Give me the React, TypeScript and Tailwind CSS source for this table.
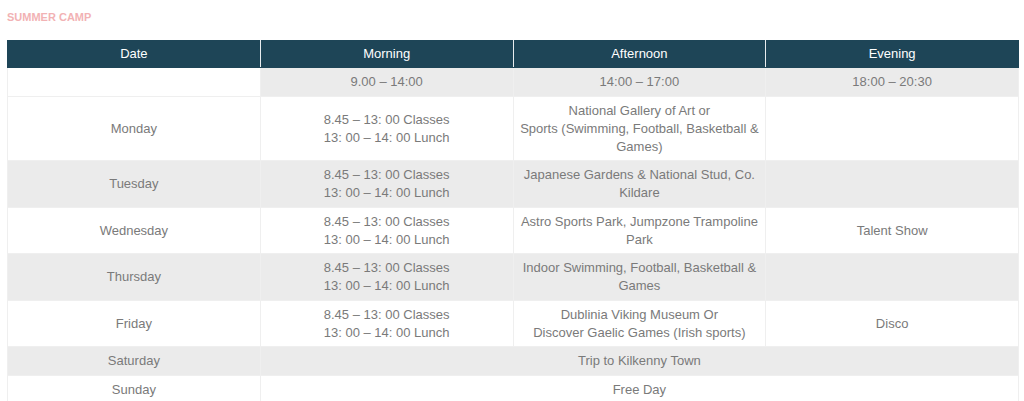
import React from "react";

const classes = ["8.45 – 13: 00 Classes", "13: 00 – 14: 00 Lunch"];

export default function App() {
  const td = "border border-[#efefef] px-[5px] pt-[5px] pb-[4.5px] text-center align-middle";
  const lines = (arr: string[]) =>
    arr.map((l, i) => (
      <React.Fragment key={i}>
        {i > 0 && <br />}
        {l}
      </React.Fragment>
    ));
  const rows: { date: string; m?: string[]; a: string[]; e?: string[]; span?: boolean; gray: boolean }[] = [
    { date: "Monday", m: classes, a: ["National Gallery of Art or", "Sports (Swimming, Football, Basketball & Games)"], gray: false },
    { date: "Tuesday", m: classes, a: ["Japanese Gardens & National Stud, Co. Kildare"], gray: true },
    { date: "Wednesday", m: classes, a: ["Astro Sports Park, Jumpzone Trampoline Park"], e: ["Talent Show"], gray: false },
    { date: "Thursday", m: classes, a: ["Indoor Swimming, Football, Basketball & Games"], gray: true },
    { date: "Friday", m: classes, a: ["Dublinia Viking Museum Or", "Discover Gaelic Games (Irish sports)"], e: ["Disco"], gray: false },
    { date: "Saturday", a: ["Trip to Kilkenny Town"], span: true, gray: true },
    { date: "Sunday", a: ["Free Day"], span: true, gray: false },
  ];
  return (
    <div className="bg-white w-[1024px] h-[401px] overflow-hidden" style={{ fontFamily: '"Liberation Sans", Arial, sans-serif' }}>
      <div className="px-[7px] pt-[11px]">
        <div className="text-[11px] leading-[13px] font-bold text-[#f2b2b4] uppercase">Summer Camp</div>
        <table className="mt-[16px] w-[1012px] border-collapse table-fixed text-[13px] leading-[18px] text-[#7a7a7a]">
          <thead>
            <tr className="bg-[#1e4557] text-white">
              {["Date", "Morning", "Afternoon", "Evening"].map((h) => (
                <th key={h} className="border border-x-[#e8ecee] border-y-[#1e4557] first:border-l-[#1e4557] last:border-r-[#1e4557] px-[5px] py-[4px] font-normal text-center w-1/4">
                  {h}
                </th>
              ))}
            </tr>
          </thead>
          <tbody>
            <tr>
              <td className={`${td} bg-white`}></td>
              <td className={`${td} bg-[#ebebeb]`}>9.00 – 14:00</td>
              <td className={`${td} bg-[#ebebeb]`}>14:00 – 17:00</td>
              <td className={`${td} bg-[#ebebeb]`}>18:00 – 20:30</td>
            </tr>
            {rows.map((r) => (
              <tr key={r.date} className={r.gray ? "bg-[#ebebeb]" : "bg-white"}>
                <td className={td}>{r.date}</td>
                {r.span ? (
                  <td className={td} colSpan={3}>{r.a[0]}</td>
                ) : (
                  <>
                    <td className={td}>{lines(r.m || [])}</td>
                    <td className={td}>{lines(r.a)}</td>
                    <td className={td}>{r.e ? lines(r.e) : null}</td>
                  </>
                )}
              </tr>
            ))}
          </tbody>
        </table>
      </div>
    </div>
  );
}
